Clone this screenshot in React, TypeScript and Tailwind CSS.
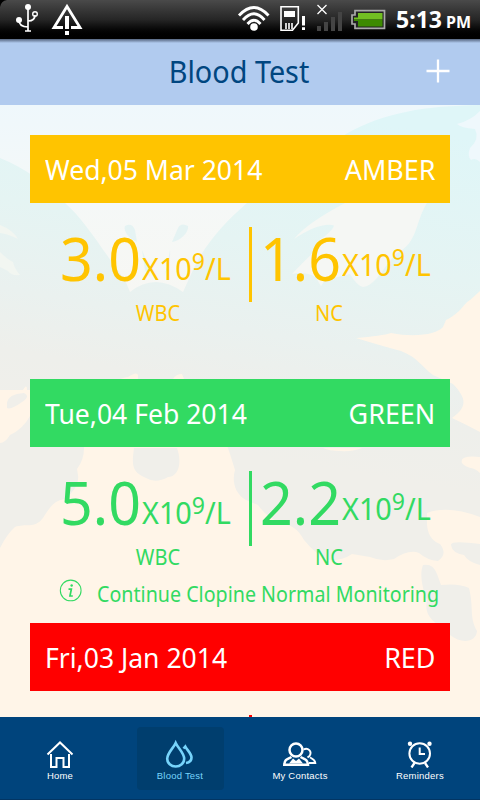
import React from "react";

const sans = "font-['Noto_Sans','Open_Sans',sans-serif]";

function StatusBar() {
  return (
    <div className="flex h-[39px] w-full shrink-0 items-start bg-linear-to-b from-[#4a4a4a] via-[#262626] via-50% to-black">
      <svg width="90" height="39" viewBox="0 0 90 39" fill="none" stroke="#fff">
        <path d="M0 0H7Q1 1 0 7Z" fill="#000" stroke="none" />
        <circle cx="28" cy="7" r="3" fill="#fff" stroke="none" />
        <path d="M28 7V31M25 31H31M19 20C19 25 23 27 28 27M28 21C33 21 35 19 35 15" strokeWidth="1.7" />
        <circle cx="19" cy="20" r="3" fill="#fff" stroke="none" />
        <circle cx="35" cy="14" r="2.3" strokeWidth="1.4" />
        <path d="M63 27.500H54L67 6.500L80 27.500H71" strokeWidth="2.8" />
        <path d="M67 16V29M67 31V35" strokeWidth="4" />
      </svg>
      <div className="flex-1" />
      <svg width="158" height="39" viewBox="230 0 158 39" fill="none">
        <g stroke="#fff" strokeWidth="2.8">
          <path d="M239 15.500Q254 -0.500 268.500 15.500" />
          <path d="M243 20Q254 7.500 264.500 20" />
          <path d="M247.500 24Q254 16.500 260.500 24" />
        </g>
        <circle cx="254" cy="27" r="3.8" fill="#fff" />
        <path d="M281 6.700H298.300V23L292.500 30.200H281Z" stroke="#fff" strokeWidth="1.6" />
        <path d="M284 11H295V17H284Z" fill="#fff" />
        <path d="M286 23V29M289 23V29M292 23V29" stroke="#fff" strokeWidth="1.6" />
        <path d="M303.500 16V25.500M303.500 27.200V30" stroke="#fff" strokeWidth="3" />
        <path d="M317.500 5L326.500 14M326.500 5L317.500 14" stroke="#fff" strokeWidth="1.3" />
        <path d="M317 26H321V31H317ZM324 22H328V31H324ZM331 17H335V31H331ZM338 12H342V31H338Z" fill="#444" />
        <path d="M355 10.700H384.500V28.300H355V24H352V15H355Z" fill="#222" stroke="#aaa" strokeWidth="1.7" />
        <path d="M358 13H382.500V19.500H354V17.500H358Z" fill="#72bf22" />
        <path d="M354 19.500H382.500V26.500H358V21H354Z" fill="#3d8a00" />
      </svg>
      <div className={`flex w-[92px] items-baseline pl-[8px] pt-[2px] font-bold text-white ${sans}`}>
        <span className="w-[50px] origin-left scale-x-[0.96] whitespace-nowrap text-[24px] leading-[34px]">5:13</span>
        <span className="origin-left text-[16px] leading-[20px]">PM</span>
      </div>
    </div>
  );
}

function Landscape() {
  return (
    <svg className="absolute inset-0" width="480" height="612" viewBox="0 105 480 612">
      <defs>
        <linearGradient id="snow" gradientUnits="userSpaceOnUse" x1="0" y1="105" x2="0" y2="300">
          <stop offset="0" stopColor="#eff8fc" />
          <stop offset=".5" stopColor="#f5f8f7" />
          <stop offset="1" stopColor="#f7f7f3" />
        </linearGradient>
        <linearGradient id="hill" gradientUnits="userSpaceOnUse" x1="280" y1="105" x2="220" y2="450">
          <stop offset="0" stopColor="#dff6f8" />
          <stop offset=".4" stopColor="#e5f4f3" />
          <stop offset=".65" stopColor="#eaf1ef" />
          <stop offset=".82" stopColor="#eeefeb" />
          <stop offset="1" stopColor="#f0efea" />
        </linearGradient>
      </defs>
      <path d="M0 105H480V717H0Z" fill="url(#snow)" />
      <path d="M0 158Q35 172 65 203C85 220 105 254 125 280L130 292Q155 272 183 292L193 270C205 244 225 222 247 203L346 134C385 112 425 106 480 105V600H0Z" fill="url(#hill)" />
      <path d="M345 203H427C415 222 418 243 397 253C386 263 376 286 363 287Q357 286 350 274Q335 278 327 279Q323 282 321 286Q318 282 316 277Q304 271 292 274Q304 261 314 252Q315 241 324 237Q338 225 332 225Q318 223 294 239Q307 223 345 203Z" fill="#f5f7f4" />
      <path d="M480 111Q470 121 457 124Q461 128 475 129Q480 139 470 148Q467 156 471 160Q475 157 480 162Z" fill="#eff8fc" />
      <path d="M0 225Q13 230 18 239Q8 234 0 233ZM0 252Q8 260 13 262Q14 268 20 275Q11 276 8 271L0 267Z" fill="#f2f6f1" />
      <g fill="#e5f3f3">
        <path d="M125 226Q132 222 135 230L137 242C129 239 123 231 125 226ZM188 226Q181 222 178 228L172 242C181 241 189 232 188 226ZM142 250L145 270L150 277Q146 258 142 250ZM170 250L167 267L164 276Q171 263 170 250Z" />
      </g>
      <g fill="#fff5e8">
        <path d="M356 338Q382 336 391 333C416 338 437 334 443 327L446 320C461 313 464 303 470 300L480 291V432Q467 425 452 418C471 405 463 395 453 384L433 375C421 366 417 357 401 351Q382 346 356 338Z" />
        <path d="M0 548Q7 534 15 527C25 523 35 529 43 518C51 505 56 500 65 499Q80 487 78 475L77 469Q84 460 84 448L90 400Q112 379 128 377Q137 371 138 375V379H173Q176 374 182 374L184 379L220 435L228 448Q231 457 235 470C232 480 234 493 246 500L258 505Q267 518 283 524Q296 525 304 540Q317 556 329 560Q342 561 352 554L370 557Q382 562 394 559Q409 549 419 553Q427 560 438 561Q448 554 440 544C425 538 427 523 427 513Q448 505 480 517V717H0Z" />
        <path d="M0 390Q15 390 23 390Q27 383 27 390H30V416Q23 429 10 435Q5 443 0 443ZM323 448H362Q350 452 341 451Q329 451 323 448ZM480 457Q459 455 462 463C466 469 473 466 480 473Z" />
      </g>
      <g fill="#f0efea">
        <path d="M7 403Q8 394 24 393Q31 396 22 402Q11 410 7 408ZM134 448H177C183 465 177 477 168 477Q156 484 146 478C131 472 132 464 134 448ZM423 565Q433 563 437 574L441 585Q459 583 469 588C474 608 469 617 477 631C476 643 461 644 450 635C438 623 423 619 427 600C423 590 419 575 423 565ZM451 545Q450 540 480 544V565Q468 562 464 555Q452 553 451 545Z" />
      </g>
    </svg>
  );
}

function Unit({ raised }: { raised?: boolean }) {
  return (
    <span className={`flex w-[89px] origin-left scale-x-[0.96] items-start text-[30px] leading-[40px] ${raised ? "pt-[18px]" : "pt-[22px]"}`}>
      <span>X10</span>
      <span className="-mt-[8px] text-[24px]">9</span>
      <span>/L</span>
    </span>
  );
}

type Tone = "amber" | "green" | "red";
const tones: Record<Tone, { bg: string; fg: string }> = {
  amber: { bg: "bg-[#ffc400]", fg: "text-[#ffc400]" },
  green: { bg: "bg-[#32da62]", fg: "text-[#32da62]" },
  red: { bg: "bg-[#ff0000]", fg: "text-[#ff0000]" },
};

function Result({ date, tone, wbc, nc, note }: { date: string; tone: Tone; wbc?: string; nc?: string; note?: string }) {
  const t = tones[tone];
  return (
    <section className={`h-[244px] shrink-0 ${t.fg}`}>
      <div className={`mx-[30px] flex h-[68px] items-center justify-between px-[15px] text-[28px] text-white ${t.bg}`}>
        <span className="origin-left scale-x-[0.948] whitespace-nowrap">{date}</span>
        <span className="origin-right scale-x-[0.96]">{tone.toUpperCase()}</span>
      </div>
      <div className="mt-[24px] flex h-[75px] pl-[60px]">
        <div className="flex w-[189px]">
          {wbc && (
            <>
              <span className="-mt-px w-[82px] origin-left scale-x-[0.955] text-[60px] leading-[65px]">{wbc}</span>
              <Unit />
            </>
          )}
        </div>
        <div className={`w-[3px] ${t.bg}`} />
        {nc && (
          <div className="flex pl-[8px]">
            <span className="-mt-px w-[82px] origin-left scale-x-[0.955] text-[60px] leading-[65px]">{nc}</span>
            <Unit raised />
          </div>
        )}
      </div>
      {wbc && (
        <div className="-mt-[2px] mb-px flex h-[30px] pl-[98px] text-[22px] leading-[24px]">
          <span className="w-[120px] scale-x-[0.91] text-center">WBC</span>
          <span className="ml-[51px] w-[120px] scale-x-[0.91] text-center">NC</span>
        </div>
      )}
      {note && (
        <div className="flex pl-[59px]">
          <svg width="24" height="24" viewBox="0 0 24 24" fill="none" stroke="currentColor" className="mt-[3px]">
            <circle cx="12.300" cy="12.500" r="10.900" strokeWidth="1.1" />
            <path d="M10 11H13L11.500 18.300H14.500" strokeWidth="1.8" />
            <circle cx="13.300" cy="7.300" r="1.300" fill="currentColor" stroke="none" />
          </svg>
          <span className="ml-[15.500px] origin-left scale-x-[0.894] whitespace-nowrap text-[22px] leading-[36px]">{note}</span>
        </div>
      )}
    </section>
  );
}

function HomeIcon() {
  return (
    <svg width="30" height="30" viewBox="0 0 30 30" fill="none" stroke="#fff" strokeWidth="2">
      <path d="M2.500 16.500L15 4.500L27.500 16.500M6 16V29H11.500V20H18.500V29H24V16" />
    </svg>
  );
}

function DropsIcon() {
  return (
    <svg width="30" height="30" viewBox="0 0 30 30" fill="none" stroke="#77d4fb" strokeWidth="2.600">
      <path d="M10.700 5C8.500 10 2.200 15 2.200 20.800A8.500 7.700 0 0 0 19.200 20.800C19.200 15 13 10 10.700 5Z" />
      <path d="M18.500 10.500L20.300 8.500C22 12 26.500 15.500 26.500 19.500C26.500 22.500 24 24.500 21 25" />
    </svg>
  );
}

function ContactsIcon() {
  return (
    <svg width="36" height="30" viewBox="0 0 36 30" fill="none" stroke="#fff" strokeWidth="2.500">
      <circle cx="14" cy="12" r="6.500" />
      <path d="M9.500 19C6 21 2.500 21 2.300 26.800H26C25.500 21 22 21 18.500 19" />
      <path d="M7 25.500L11 20.500L14 23L17 20.500L21 25.500Z" fill="#fff" stroke="none" />
      <path d="M21.500 11.500C26 9 30.500 13.500 27.500 18L25.500 19.500M28 19.500C31 21 33 21.500 33.300 25H27" strokeWidth="1.900" />
    </svg>
  );
}

function ClockIcon() {
  return (
    <svg width="30" height="30" viewBox="0 0 30 30" fill="none" stroke="#fff" strokeWidth="2">
      <circle cx="14.700" cy="15.500" r="10.300" />
      <path d="M14.700 9.500V16H20" />
      <path d="M9.500 25L6.500 29.500M20 25L23 29.500" strokeWidth="2.300" />
      <circle cx="5" cy="5.800" r="2.200" fill="#fff" stroke="none" />
      <circle cx="24.500" cy="5.800" r="2.200" fill="#fff" stroke="none" />
    </svg>
  );
}

const tabs = [
  { label: "Home", icon: <HomeIcon /> },
  { label: "Blood Test", icon: <DropsIcon />, active: true },
  { label: "My Contacts", icon: <ContactsIcon /> },
  { label: "Reminders", icon: <ClockIcon /> },
];

function TabBar() {
  return (
    <nav className="grid h-[83px] shrink-0 grid-cols-4 border-b border-[#023563] bg-[#00447c] pt-[10px]">
      {tabs.map((tab) => (
        <div
          key={tab.label}
          className={`mx-auto flex h-[63px] w-[87px] flex-col items-center rounded-sm pt-[11px] font-['Liberation_Sans',Arial,sans-serif] text-[9.5px] tracking-[0.22px] ${tab.active ? "bg-[#003e6e] text-[#77d4fb]" : "text-white"}`}
        >
          {tab.icon}
          <span className="mt-px whitespace-nowrap leading-[14px]">{tab.label}</span>
        </div>
      ))}
    </nav>
  );
}

export default function App() {
  return (
    <div className={`flex h-[800px] w-[480px] flex-col overflow-hidden bg-black ${sans}`}>
      <StatusBar />
      <header className="relative grid h-[66px] shrink-0 grid-cols-[1fr_160px_1fr] items-center bg-[#b1cbef] pb-[2px] text-[#004680]">
        <div className="absolute inset-x-0 top-0 h-[4px] bg-linear-to-b from-[#55657f] to-[#b1cbef]" />
        <span />
        <h1 className="-ml-[2px] scale-x-[0.96] whitespace-nowrap pt-px text-center text-[30px] leading-[40px]">Blood Test</h1>
        <svg className="ml-auto mr-[29px]" width="26" height="26" viewBox="0 0 26 26" stroke="#fff" strokeWidth="2.300">
          <path d="M1.500 13H24.500M13 1.500V24.500" />
        </svg>
      </header>
      <main className="relative h-[612px] shrink-0 overflow-hidden">
        <Landscape />
        <div className="relative flex flex-col pt-[30px]">
          <Result date="Wed,05 Mar 2014" tone="amber" wbc="3.0" nc="1.6" />
          <Result date="Tue,04 Feb 2014" tone="green" wbc="5.0" nc="2.2" note="Continue Clopine Normal Monitoring" />
          <Result date="Fri,03 Jan 2014" tone="red" />
        </div>
      </main>
      <TabBar />
    </div>
  );
}
